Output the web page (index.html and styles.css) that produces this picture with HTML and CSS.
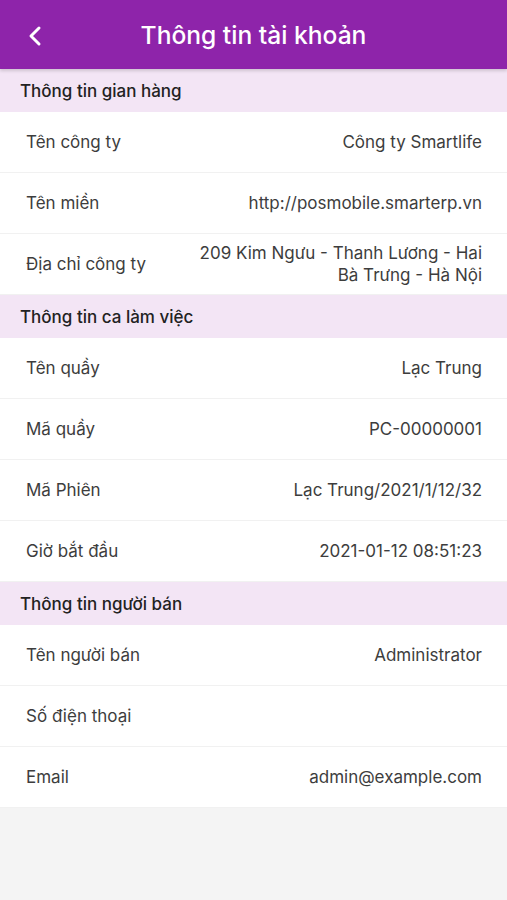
FILE: index.html
```html
<!DOCTYPE html>
<html lang="vi">
<head>
    <meta charset="UTF-8">
    <meta name="viewport" content="width=device-width, initial-scale=1.0">
    <title>Thông tin tài khoản</title>
    <link rel="stylesheet" href="styles.css">
</head>
<body>
    <header class="app-bar">
        <a class="back-btn" href="#">
            <svg width="16" height="22" viewBox="0 0 16 22">
                <path d="M12 3 L4 11 L12 19" fill="none" stroke="#fff" stroke-width="3" stroke-linecap="round" stroke-linejoin="round"/>
            </svg>
        </a>
        <h1>Thông tin tài khoản</h1>
    </header>

    <section class="group">
        <div class="group-title">Thông tin gian hàng</div>
        <div class="row"><span class="label">Tên công ty</span><span class="value">Công ty Smartlife</span></div>
        <div class="row"><span class="label">Tên miền</span><span class="value">http://posmobile.smarterp.vn</span></div>
        <div class="row"><span class="label">Địa chỉ công ty</span><span class="value">209 Kim Ngưu - Thanh Lương - Hai Bà Trưng - Hà Nội</span></div>
    </section>

    <section class="group">
        <div class="group-title">Thông tin ca làm việc</div>
        <div class="row"><span class="label">Tên quầy</span><span class="value">Lạc Trung</span></div>
        <div class="row"><span class="label">Mã quầy</span><span class="value">PC-00000001</span></div>
        <div class="row"><span class="label">Mã Phiên</span><span class="value">Lạc Trung/2021/1/12/32</span></div>
        <div class="row"><span class="label">Giờ bắt đầu</span><span class="value">2021-01-12 08:51:23</span></div>
    </section>

    <section class="group">
        <div class="group-title">Thông tin người bán</div>
        <div class="row"><span class="label">Tên người bán</span><span class="value">Administrator</span></div>
        <div class="row"><span class="label">Số điện thoại</span><span class="value"></span></div>
        <div class="row"><span class="label">Email</span><span class="value">admin@example.com</span></div>
    </section>
</body>
</html>
```

FILE: styles.css
```css
body {
    font-family: Inter, 'Noto Sans', sans-serif;
    margin: 0;
    padding: 0;
    background-color: #f4f4f4;
    color: #3d3d3d;
}

.app-bar {
    height: 69px;
    background-color: #8e24aa;
    display: flex;
    align-items: center;
    justify-content: center;
    position: relative;
    box-shadow: 0 2px 3px rgba(0, 0, 0, 0.15);
    z-index: 1;
}

.app-bar h1 {
    margin: 0;
    font-size: 24.6px;
    font-weight: 500;
    color: #fff;
}

.back-btn {
    position: absolute;
    left: 27px;
    top: 25px;
    display: flex;
}

.group-title {
    height: 43px;
    padding: 0 20px;
    display: flex;
    align-items: center;
    background-color: #f3e5f5;
    font-size: 17px;
    font-weight: 500;
    color: #222;
}

.row {
    min-height: 60px;
    padding: 0 25px 0 26px;
    display: flex;
    align-items: center;
    justify-content: space-between;
    gap: 20px;
    background-color: #fff;
    border-bottom: 1px solid #f1f1f1;
    font-size: 17px;
}

.label {
    flex-shrink: 0;
}

.value {
    text-align: right;
    max-width: 285px;
    line-height: 22px;
}
```
